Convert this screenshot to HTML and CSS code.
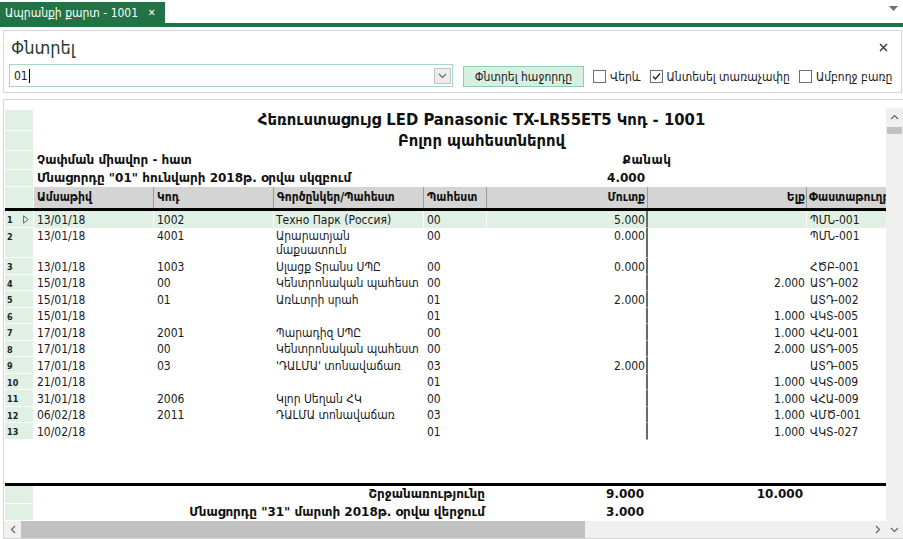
FILE: index.html
```html
<!DOCTYPE html>
<html lang="hy">
<head>
<meta charset="utf-8">
<title>Ապրանքի քարտ - 1001</title>
<link rel="stylesheet" href="styles.css">
</head>
<body>
<div class="app">
  <div class="tabbar">
    <div class="tab"><span class="tab-label">Ապրանքի քարտ - 1001</span><span class="tab-x">✕</span></div>
    <div class="tab-menu"><svg width="9" height="5" viewBox="0 0 9 5"><path d="M0 0H9L4.5 5Z" fill="#707070"/></svg></div>
  </div>
  <div class="tabline"></div>

  <div class="search">
    <div class="search-head">
      <span class="search-title">Փնտրել</span>
      <svg class="search-close" width="9" height="9" viewBox="0 0 9 9"><path d="M1 1L8 8M8 1L1 8" stroke="#333" stroke-width="1.4"/></svg>
    </div>
    <div class="search-row">
      <div class="combo">
        <span class="combo-text">01</span><span class="caret"></span>
        <span class="combo-btn"><svg width="9" height="6" viewBox="0 0 9 6"><path d="M1 1L4.5 4.5L8 1" fill="none" stroke="#666" stroke-width="1.1"/></svg></span>
      </div>
      <div class="btn">Փնտրել հաջորդը</div>
      <div class="chk"><span class="box"></span>Վերև</div>
      <div class="chk"><span class="box"><svg width="11" height="11" viewBox="0 0 11 11"><path d="M2 5.5L4.3 8L9 2.5" fill="none" stroke="#222" stroke-width="1.3"/></svg></span>Անտեսել տառաչափը</div>
      <div class="chk"><span class="box"></span>Ամբողջ բառը</div>
    </div>
  </div>

  <div class="report">
    <div class="report-main">
      <div class="sheet">
        <div class="grid">
          <div class="row r-title"><div class="ind"></div><div class="title">Հեռուստացույց LED Panasonic TX-LR55ET5 Կոդ - 1001</div></div>
          <div class="row r-sub"><div class="ind"></div><div class="title">Բոլոր պահեստներով</div></div>
          <div class="row r-unit"><div class="ind"></div><div class="lbl span4">Չափման միավոր - հատ</div><div class="lbl qty">Քանակ</div></div>
          <div class="row r-bal"><div class="ind"></div><div class="lbl span4">Մնացորդը "01" հունվարի 2018թ. օրվա սկզբում</div><div class="lbl num">4.000</div></div>
          <div class="row r-head">
            <div class="ind ind-head"></div>
            <div class="h">Ամսաթիվ</div>
            <div class="h">Կոդ</div>
            <div class="h">Գործընկեր/Պահեստ</div>
            <div class="h">Պահեստ</div>
            <div class="h h-in">Մուտք</div>
            <div class="h h-out">Ելք</div>
            <div class="h h-doc">Փաստաթուղթ</div>
          </div>
          <div class="thick"></div>

          <div class="row sel"><div class="ind rn"><span>1</span><svg width="6" height="9" viewBox="0 0 6 9"><path d="M0.6 0.8L5.2 4.5L0.6 8.2Z" fill="none" stroke="#666" stroke-width="1"/></svg></div><div class="c">13/01/18</div><div class="c">1002</div><div class="c c3">Техно Парк (Россия)</div><div class="c">00</div><div class="c in">5.000</div><div class="c out"></div><div class="c doc">ՊՄՆ-001</div></div>
          <div class="row"><div class="ind rn"><span>2</span></div><div class="c">13/01/18</div><div class="c">4001</div><div class="c c3">Արարատյան<br>մաքսատուն</div><div class="c">00</div><div class="c in">0.000</div><div class="c out"></div><div class="c doc">ՊՄՆ-001</div></div>
          <div class="row"><div class="ind rn"><span>3</span></div><div class="c">13/01/18</div><div class="c">1003</div><div class="c c3">Սլացք Տրանս ՍՊԸ</div><div class="c">00</div><div class="c in">0.000</div><div class="c out"></div><div class="c doc">ՀԾԲ-001</div></div>
          <div class="row"><div class="ind rn"><span>4</span></div><div class="c">15/01/18</div><div class="c">00</div><div class="c c3">Կենտրոնական պահեստ</div><div class="c">00</div><div class="c in"></div><div class="c out">2.000</div><div class="c doc">ԱՏԴ-002</div></div>
          <div class="row"><div class="ind rn"><span>5</span></div><div class="c">15/01/18</div><div class="c">01</div><div class="c c3">Առևտրի սրահ</div><div class="c">01</div><div class="c in">2.000</div><div class="c out"></div><div class="c doc">ԱՏԴ-002</div></div>
          <div class="row"><div class="ind rn"><span>6</span></div><div class="c">15/01/18</div><div class="c"></div><div class="c c3"></div><div class="c">01</div><div class="c in"></div><div class="c out">1.000</div><div class="c doc">ՎԿՏ-005</div></div>
          <div class="row"><div class="ind rn"><span>7</span></div><div class="c">17/01/18</div><div class="c">2001</div><div class="c c3">Պարադիզ ՍՊԸ</div><div class="c">00</div><div class="c in"></div><div class="c out">1.000</div><div class="c doc">ՎՀԱ-001</div></div>
          <div class="row"><div class="ind rn"><span>8</span></div><div class="c">17/01/18</div><div class="c">00</div><div class="c c3">Կենտրոնական պահեստ</div><div class="c">00</div><div class="c in"></div><div class="c out">2.000</div><div class="c doc">ԱՏԴ-005</div></div>
          <div class="row"><div class="ind rn"><span>9</span></div><div class="c">17/01/18</div><div class="c">03</div><div class="c c3">'ԴԱԼՄԱ' տոնավաճառ</div><div class="c">03</div><div class="c in">2.000</div><div class="c out"></div><div class="c doc">ԱՏԴ-005</div></div>
          <div class="row"><div class="ind rn"><span>10</span></div><div class="c">21/01/18</div><div class="c"></div><div class="c c3"></div><div class="c">01</div><div class="c in"></div><div class="c out">1.000</div><div class="c doc">ՎԿՏ-009</div></div>
          <div class="row"><div class="ind rn"><span>11</span></div><div class="c">31/01/18</div><div class="c">2006</div><div class="c c3">Կլոր Սեղան ՀԿ</div><div class="c">00</div><div class="c in"></div><div class="c out">1.000</div><div class="c doc">ՎՀԱ-009</div></div>
          <div class="row"><div class="ind rn"><span>12</span></div><div class="c">06/02/18</div><div class="c">2011</div><div class="c c3">ԴԱԼՄԱ տոնավաճառ</div><div class="c">03</div><div class="c in"></div><div class="c out">1.000</div><div class="c doc">ՎՄԾ-001</div></div>
          <div class="row"><div class="ind rn"><span>13</span></div><div class="c">10/02/18</div><div class="c"></div><div class="c c3"></div><div class="c">01</div><div class="c in"></div><div class="c out">1.000</div><div class="c doc">ՎԿՏ-027</div></div>

          <div class="filler"></div>
          <div class="thick"></div>

          <div class="row r-foot"><div class="ind"></div><div class="lbl span4 right">Շրջանառությունը</div><div class="lbl num">9.000</div><div class="lbl num">10.000</div></div>
          <div class="row r-foot2"><div class="ind"></div><div class="lbl span4 right">Մնացորդը "31" մարտի 2018թ. օրվա վերջում</div><div class="lbl num">3.000</div></div>
        </div>
      </div>
      <div class="hscroll">
        <div class="sb-btn"><svg width="6" height="9" viewBox="0 0 6 9"><path d="M5 1L1.5 4.5L5 8" fill="none" stroke="#606060" stroke-width="1.1"/></svg></div>
        <div class="h-track"><div class="h-thumb"></div></div>
        <div class="sb-btn"><svg width="6" height="9" viewBox="0 0 6 9"><path d="M1 1L4.5 4.5L1 8" fill="none" stroke="#606060" stroke-width="1.1"/></svg></div>
      </div>
    </div>
    <div class="vscroll">
      <div class="v-top"></div>
      <div class="sb-btn"><svg width="9" height="6" viewBox="0 0 9 6"><path d="M1 5L4.5 1.5L8 5" fill="none" stroke="#606060" stroke-width="1.1"/></svg></div>
      <div class="v-track"><div class="v-thumb"></div></div>
      <div class="sb-btn"><svg width="9" height="6" viewBox="0 0 9 6"><path d="M1 1L4.5 4.5L8 1" fill="none" stroke="#606060" stroke-width="1.1"/></svg></div>
    </div>
  </div>
</div>
</body>
</html>
```
FILE: styles.css
```css
* { box-sizing: border-box; }
html, body { margin: 0; padding: 0; }
body {
  width: 903px;
  height: 539px;
  overflow: hidden;
  background: #fff;
  font-family: "DejaVu Sans Condensed", "DejaVu Sans", sans-serif;
  font-size: 12px;
  color: #1a1a1a;
}
.app { width: 903px; height: 539px; display: flex; flex-direction: column; }

/* tab bar */
.tabbar { height: 23px; display: flex; align-items: flex-end; }
.tab {
  width: 165px; height: 21px; background: #217346; color: #fff;
  display: flex; align-items: center; padding-left: 5px;
  font-size: 12px;
}
.tab-label { width: 143px; white-space: nowrap; overflow: hidden; }
.tab-x { font-size: 10px; font-weight: bold; }
.tab-menu { margin-left: auto; width: 14px; height: 23px; display: flex; align-items: center; padding-bottom: 6px; }
.tabline { height: 4px; background: #217346; }

/* search panel */
.search {
  margin: 3px 1px 0 3px;
  border: 1px solid #d6d6d6;
  height: 63px;
}
.search-head { height: 33px; display: flex; align-items: center; padding: 0 13px 0 7px; }
.search-title { font-size: 18px; color: #1f3a2e; }
.search-close { margin-left: auto; }
.search-row { height: 23px; display: flex; align-items: center; padding-left: 5px; }
.combo {
  width: 444px; height: 23px; border: 1px solid #a6d9bb;
  display: flex; align-items: center; padding-left: 4px;
}
.combo-text { font-size: 12px; }
.caret { width: 1px; height: 14px; background: #000; margin-left: 1px; }
.combo-btn {
  margin-left: auto; margin-right: 1px; width: 17px; height: 16px;
  background: #ececec; border: 1px solid #c4c4c4;
  display: flex; align-items: center; justify-content: center;
}
.btn {
  margin-left: 10px; width: 121px; height: 21px; align-self: flex-end;
  background: #d5efe0; border: 1px solid #8fcfaa;
  display: flex; align-items: center; justify-content: center;
  font-size: 12px; color: #1a1a1a;
}
.chk { margin-left: 9px; display: flex; align-items: center; font-size: 12px; white-space: nowrap; padding-top: 2px; }
.chk:first-of-type { margin-left: 10px; }
.box {
  width: 13px; height: 13px; border: 1px solid #6f6f6f; background: #fff;
  margin-right: 4px; display: flex; align-items: center; justify-content: center;
}

/* report */
.report {
  margin: 6px 0 0 3px;
  height: 440px;
  border-top: 1px solid #d6d6d6;
  border-left: 1px solid #d6d6d6;
  border-bottom: 1px solid #d6d6d6;
  display: flex;
}
.report-main { width: 882px; display: flex; flex-direction: column; }
.sheet { height: 421px; overflow: hidden; padding-top: 10px; }
.grid { width: 925px; }
.row {
  display: grid;
  grid-template-columns: 30px 120px 120px 150px 63px 161px 159px 122px;
}
.ind { background: #e1f0e4; margin: 0 1px; border-bottom: 1px solid #fff; }
.ind-head { border-bottom: none; }
.title {
  grid-column: 2 / -1; text-align: center; font-weight: bold; font-size: 16.5px;
  color: #111; white-space: nowrap;
}
.r-title { height: 21px; }
.r-title .title { line-height: 20px; }
.r-sub { height: 20px; }
.r-sub .title { line-height: 19px; }
.r-unit { height: 19px; }
.r-bal { height: 17px; }
.lbl {
  font-family: "DejaVu Sans", sans-serif;
  font-weight: bold; font-size: 12px; white-space: nowrap; color: #111;
}
.r-unit .lbl { line-height: 19px; }
.r-bal .lbl { line-height: 16px; }
.span4 { grid-column: 2 / 6; padding-left: 3px; }
.span4.right { text-align: right; padding-right: 2px; padding-left: 0; }
.qty { grid-column: 6 / 8; text-align: center; letter-spacing: 0.5px; }
.num { text-align: right; padding-right: 3px; }

.r-head { height: 21px; }
.h {
  background: #d4d4d4; border-right: 1px solid #9b9b9b;
  font-weight: bold; font-size: 12px; line-height: 21px;
  padding-left: 3px; white-space: nowrap; overflow: hidden; color: #111;
}
.h-in { text-align: right; padding-right: 2px; }
.h-out { text-align: right; padding-right: 1px; }
.h-doc { padding-left: 2px; }
.thick { height: 3px; background: #000; margin-left: 1px; }

.c {
  font-size: 12px; line-height: 14px; padding: 1.5px 3px 0;
  border-bottom: 1px solid transparent;
  white-space: nowrap; overflow: hidden;
}
.c3 { padding-left: 2px; }
.in { text-align: right; padding-right: 1px; border-right: 2px solid #6a6a6a; }
.out { text-align: right; padding-right: 2px; }
.sel .c { background: #e1f0e4; border-right: 1px solid #fff; }
.sel .c.in { border-right: 2px solid #6a6a6a; }
.rn {
  display: flex; justify-content: space-between; align-items: flex-start;
  padding: 4px 4px 0 2px; font-size: 9px; font-weight: bold; line-height: 10px; color: #222;
}

.filler { height: 43.5px; }
.r-foot { height: 17.5px; }
.r-foot .lbl, .r-foot2 .lbl { line-height: 17px; }
.r-foot .num { padding-right: 4px; }
.r-foot2 { height: 17.5px; }
.r-foot2 .num { padding-right: 4px; }

/* scrollbars */
.hscroll { height: 17px; display: flex; background: #f0f0f0; }
.sb-btn { width: 17px; height: 17px; display: flex; align-items: center; justify-content: center; background: #f0f0f0; flex: none; }
.h-track { flex: 1; }
.h-thumb { width: 564px; height: 17px; background: #c1c1c1; }
.vscroll { width: 17px; display: flex; flex-direction: column; }
.v-top { height: 8px; background: #fff; }
.v-track { flex: 1; background: #f0f0f0; }
.v-thumb { height: 7px; margin: 2px 1px 0 1px; background: #c1c1c1; }
.vscroll .sb-btn { background: #f0f0f0; }
```
